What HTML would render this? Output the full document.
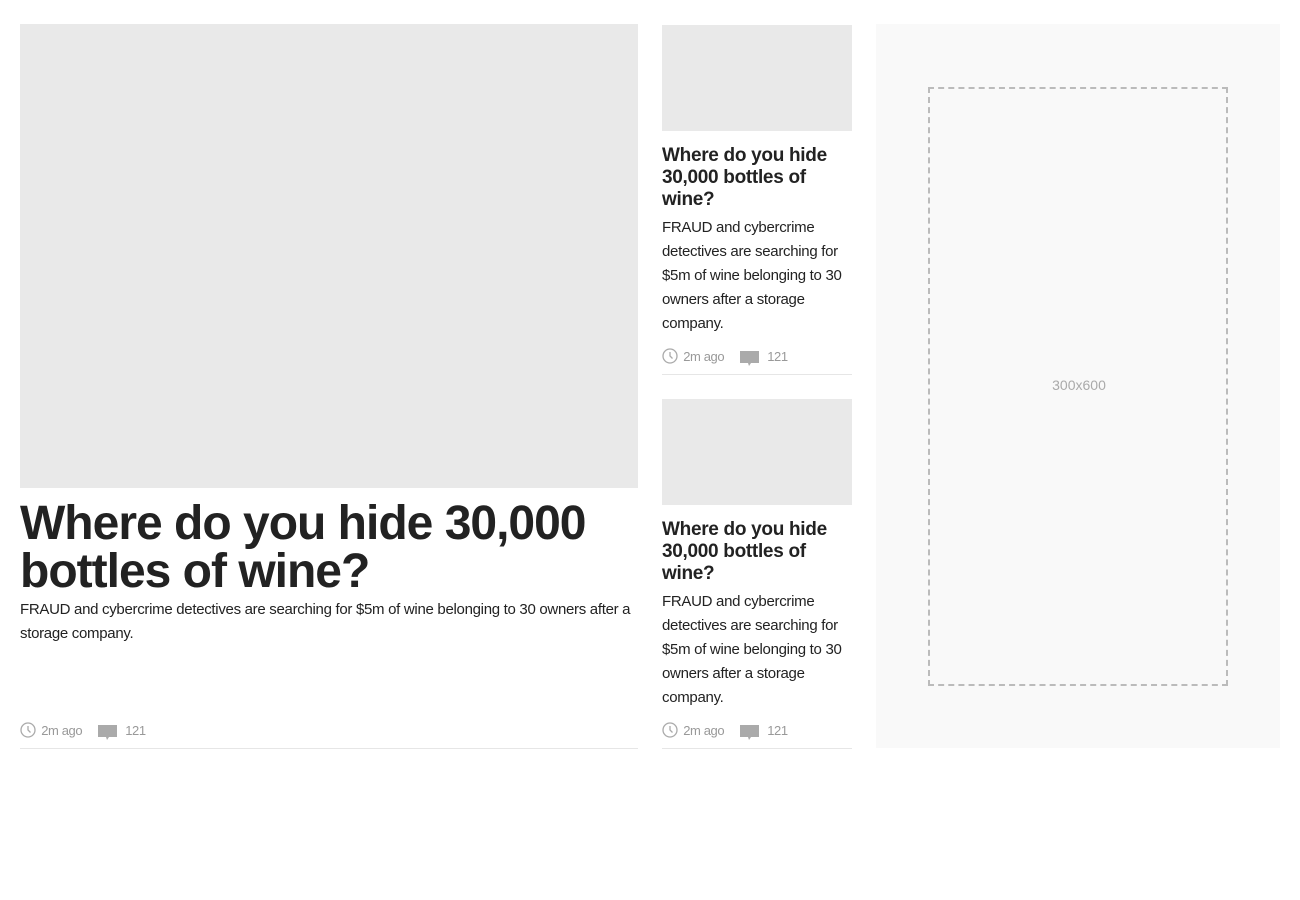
<!DOCTYPE html>
<html><head><style>
*{margin:0;padding:0;box-sizing:border-box}
body{width:1300px;height:900px;background:#fff;font-family:"Liberation Sans",sans-serif;color:#222;position:relative;overflow:hidden}
.a{position:absolute}
.img{background:#e9e9e9}
h1{font-size:48px;line-height:48px;font-weight:bold;letter-spacing:-1px;color:#222}
h2{font-size:19px;line-height:22px;font-weight:bold;letter-spacing:-0.3px;color:#222}
p{font-size:15px;line-height:24px;letter-spacing:-0.3px;color:#222}
</style></head><body>
<div class="a img" style="left:20px;top:24px;width:618px;height:464px"></div>
<h1 class="a" style="left:20px;top:500px;width:618px">Where do you hide 30,000 bottles of wine?</h1>
<p class="a" style="left:20px;top:598px;width:618px">FRAUD and cybercrime detectives are searching for $5m of wine belonging to 30 owners after a storage company.</p>

<div class="a img" style="left:662px;top:25px;width:190px;height:106px"></div>
<h2 class="a" style="left:662px;top:145px;width:190px">Where do you hide 30,000 bottles of wine?</h2>
<p class="a" style="left:662px;top:216px;width:190px">FRAUD and cybercrime detectives are searching for $5m of wine belonging to 30 owners after a storage company.</p>

<div class="a img" style="left:662px;top:399px;width:190px;height:106px"></div>
<h2 class="a" style="left:662px;top:519px;width:190px">Where do you hide 30,000 bottles of wine?</h2>
<p class="a" style="left:662px;top:590px;width:190px">FRAUD and cybercrime detectives are searching for $5m of wine belonging to 30 owners after a storage company.</p>

<div class="a" style="left:20px;top:722px;width:618px;height:27px;border-bottom:1px solid #e6e6e6"></div>
<div class="a" style="left:662px;top:348px;width:190px;height:27px;border-bottom:1px solid #e6e6e6"></div>
<div class="a" style="left:662px;top:722px;width:190px;height:27px;border-bottom:1px solid #e6e6e6"></div>

<div class="a" style="left:20px;top:722px;font-size:13px;color:#999;letter-spacing:-0.4px"><svg width="16" height="16" viewBox="0 0 16 16" style="vertical-align:-3px"><circle cx="8" cy="8" r="7" fill="none" stroke="#aaa" stroke-width="1.3"/><path d="M8 4v4l2.5 2.5" fill="none" stroke="#aaa" stroke-width="1.3"/></svg> <span style="margin-left:2px">2m ago</span><svg width="19" height="17" viewBox="0 0 19 17" style="vertical-align:-6px;margin-left:16px"><path d="M0 1h19v12H11l-2 3-1-3H0z" fill="#aaa"/></svg><span style="margin-left:8px">121</span></div>
<div class="a" style="left:662px;top:348px;font-size:13px;color:#999;letter-spacing:-0.4px"><svg width="16" height="16" viewBox="0 0 16 16" style="vertical-align:-3px"><circle cx="8" cy="8" r="7" fill="none" stroke="#aaa" stroke-width="1.3"/><path d="M8 4v4l2.5 2.5" fill="none" stroke="#aaa" stroke-width="1.3"/></svg> <span style="margin-left:2px">2m ago</span><svg width="19" height="17" viewBox="0 0 19 17" style="vertical-align:-6px;margin-left:16px"><path d="M0 1h19v12H11l-2 3-1-3H0z" fill="#aaa"/></svg><span style="margin-left:8px">121</span></div>
<div class="a" style="left:662px;top:722px;font-size:13px;color:#999;letter-spacing:-0.4px"><svg width="16" height="16" viewBox="0 0 16 16" style="vertical-align:-3px"><circle cx="8" cy="8" r="7" fill="none" stroke="#aaa" stroke-width="1.3"/><path d="M8 4v4l2.5 2.5" fill="none" stroke="#aaa" stroke-width="1.3"/></svg> <span style="margin-left:2px">2m ago</span><svg width="19" height="17" viewBox="0 0 19 17" style="vertical-align:-6px;margin-left:16px"><path d="M0 1h19v12H11l-2 3-1-3H0z" fill="#aaa"/></svg><span style="margin-left:8px">121</span></div>

<div class="a" style="left:876px;top:24px;width:404px;height:724px;background:#f9f9f9"></div>
<div class="a" style="left:928px;top:87px;width:300px;height:599px;border:2px dashed #bbb"></div>
<div class="a" style="left:928px;top:377px;width:302px;text-align:center;font-size:14px;color:#aaa">300x600</div>
</body></html>
